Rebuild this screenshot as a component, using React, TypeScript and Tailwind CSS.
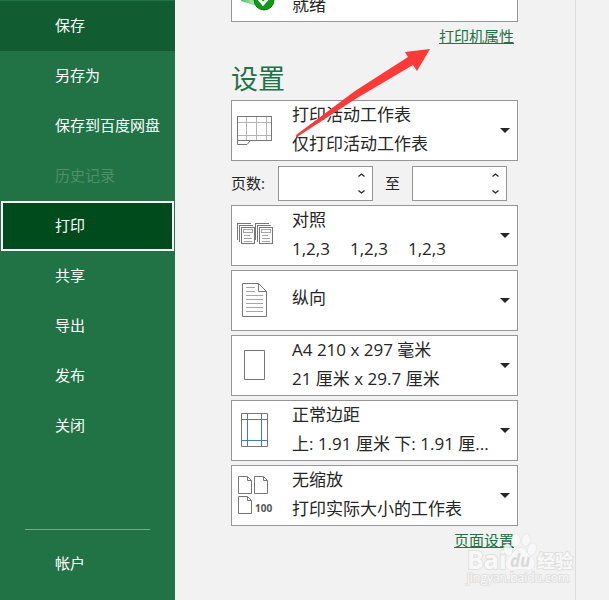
import type { ReactNode } from 'react';

type NavItem = {
  label: string;
  state?: 'hover' | 'active' | 'disabled';
};

const navItems: NavItem[] = [
  { label: '保存', state: 'hover' },
  { label: '另存为' },
  { label: '保存到百度网盘' },
  { label: '历史记录', state: 'disabled' },
  { label: '打印', state: 'active' },
  { label: '共享' },
  { label: '导出' },
  { label: '发布' },
  { label: '关闭' },
];

const NavButton = ({ label, state }: NavItem) => {
  if (state === 'active') {
    return (
      <button
        aria-current="page"
        className="h-[50px] mx-px pl-[52px] pb-[2px] text-left border-2 border-white bg-[#004b1c]"
      >
        {label}
      </button>
    );
  }
  return (
    <button
      disabled={state === 'disabled'}
      className={
        state === 'hover'
          ? 'h-[50px] pl-[55px] pb-[2px] text-left bg-[#125c31]'
          : 'h-[50px] pl-[55px] pb-[2px] text-left disabled:text-[#4f9069]'
      }
    >
      {label}
    </button>
  );
};

const Sidebar = () => (
  <nav className="w-[175px] shrink-0 pt-px flex flex-col bg-[#217346] text-white text-[15px]">
    {navItems.map((item) => (
      <NavButton key={item.label} {...item} />
    ))}
    <hr className="mt-[78px] mx-[25px] border-[#6fae88]" />
    <div className="mt-[9px] flex flex-col">
      <NavButton label="帐户" />
    </div>
  </nav>
);

const PrinterIcon = () => (
  <svg width="48" height="59" viewBox="0 0 48 59" fill="none">
    <defs>
      <linearGradient id="tray" x1="0" y1="0" x2="1" y2="0">
        <stop offset="0" stopColor="#4fc45c" />
        <stop offset="1" stopColor="#b9ecbd" />
      </linearGradient>
    </defs>
    <path d="M9 30 L24 28 V44 L9 39 Z" fill="url(#tray)" />
    <circle cx="32" cy="38" r="10" fill="#0f9a17" stroke="#0a7a10" />
    <path d="M27 37 L31 42 L38 34" stroke="#fff" strokeWidth="3" />
  </svg>
);

const SheetIcon = () => (
  <svg width="48" height="59" viewBox="0 0 48 59" fill="none" shapeRendering="crispEdges">
    <path d="M14.5 16 V40 M24.5 16 V40 M34.5 16 V40 M6 21.5 H40 M6 34.5 H40" stroke="#b4b4b4" />
    <path d="M5.5 15.5 H39.5 V39.5 H5.5 Z" stroke="#777" />
    <path d="M5.5 39.5 V43.5 H15 L18.5 39.5" stroke="#777" shapeRendering="auto" />
  </svg>
);

const CollatePages = ({ x }: { x: number }) => (
  <g transform={`translate(${x} 0)`}>
    <path d="M.5 34 V17.5 H14 M2.5 36 V19.5 H16" stroke="#777" />
    <path d="M4.5 21.5 H17.5 V37.5 H4.5 Z" stroke="#777" fill="#fff" />
    <path d="M6.5 23.5 H15.5 V26.5 H6.5 Z M7 29.5 H13 M7 32.5 H15 M7 35.5 H15" stroke="#a6a6a6" />
  </g>
);

const CollateIcon = () => (
  <svg width="48" height="59" viewBox="0 0 48 59" fill="none" shapeRendering="crispEdges">
    <CollatePages x={5} />
    <CollatePages x={23} />
  </svg>
);

const PortraitIcon = () => (
  <svg width="48" height="59" viewBox="0 0 48 59" fill="none">
    <path
      d="M14 16.5 H23 M14 20.5 H23 M14 24.5 H31 M14 28.5 H31 M14 32.5 H31 M14 36.5 H31 M14 40.5 H31"
      stroke="#a6a6a6"
    />
    <path d="M10.5 12.5 H26.5 L34.5 20.5 V45.5 H10.5 Z M26.5 12.5 V20.5 H34.5" stroke="#777" />
  </svg>
);

const PaperIcon = () => (
  <svg width="48" height="59" viewBox="0 0 48 59" fill="none">
    <path d="M12.5 14.5 H32.5 V43.5 H12.5 Z" stroke="#777" />
  </svg>
);

const MarginIcon = () => (
  <svg width="48" height="59" viewBox="0 0 48 59" fill="none">
    <path d="M9.5 12.5 H35.5 V45.5 H9.5 Z" stroke="#777" />
    <path d="M15.5 13 V45 M29.5 13 V45 M10 18.5 H35 M10 39.5 H35" stroke="#3e7dbf" />
  </svg>
);

const ScaleIcon = () => (
  <svg width="48" height="59" viewBox="0 0 48 59" fill="none">
    <g stroke="#777">
      <path d="M6.5 10.5 H15.5 L19.5 14.5 V27.5 H6.5 Z M15.5 10.5 V14.5 H19.5" />
      <path d="M22.5 10.5 H31.5 L35.5 14.5 V27.5 H22.5 Z M31.5 10.5 V14.5 H35.5" />
      <path d="M6.5 30.5 H15.5 L19.5 34.5 V47.5 H6.5 Z M15.5 30.5 V34.5 H19.5" />
    </g>
    <text x="23" y="46" fontSize="10" fontWeight="700" fill="#555">
      100
    </text>
  </svg>
);

type OptionProps = {
  icon: ReactNode;
  children: ReactNode;
};

const OptionBox = ({ icon, children }: OptionProps) => (
  <button
    aria-haspopup="listbox"
    className="w-full h-[61px] pr-[7px] flex items-center text-left border border-[#969696] bg-white text-[17px] leading-[29px] text-[#262626]"
  >
    <span className="w-[60px] shrink-0">{icon}</span>
    <span className="flex-1 min-w-0 pb-1">{children}</span>
    <svg className="shrink-0" width="10" height="5" viewBox="0 0 10 5">
      <path d="M0 0 H10 L5 5 Z" fill="#262626" />
    </svg>
  </button>
);

const PageInput = ({ id, label }: { id: string; label: string }) => (
  <div className="w-[95px] h-[35px] flex border border-[#969696] bg-white">
    <input id={id} aria-label={label} className="flex-1 min-w-0 px-2 text-[15px] outline-none" />
    <div className="w-[22px] flex flex-col">
      <button aria-label="增加" className="flex-1 flex items-center justify-center">
        <svg width="7" height="4" viewBox="0 0 7 4" fill="none">
          <path d="M.5 3.5 L3.5 1 L6.5 3.5" stroke="#262626" strokeWidth="1.3" />
        </svg>
      </button>
      <button aria-label="减少" className="flex-1 flex items-center justify-center">
        <svg width="7" height="4" viewBox="0 0 7 4" fill="none">
          <path d="M.5 .5 L3.5 3 L6.5 .5" stroke="#262626" strokeWidth="1.3" />
        </svg>
      </button>
    </div>
  </div>
);

const Arrow = () => (
  <svg
    className="absolute left-[295px] top-[48px] pointer-events-none"
    width="136"
    height="90"
    viewBox="0 0 136 90"
  >
    <path d="M135 1 L110 4 L113 9 L60 43 L1 87 L2 89 L62 50 L118 17 L122 23 Z" fill="#fd3a38" />
  </svg>
);

const Watermark = () => (
  <svg
    className="absolute left-[464px] top-[532px] pointer-events-none"
    width="116"
    height="56"
    viewBox="0 0 116 56"
    fill="#fafafa"
    stroke="#dedede"
    paintOrder="stroke"
    opacity="0.85"
  >
    <text x="3" y="37" fontSize="25" fontWeight="700" strokeWidth="2">
      Bai
    </text>
    <ellipse cx="44" cy="18" rx="4" ry="6" transform="rotate(-15 44 18)" />
    <ellipse cx="52" cy="8" rx="4" ry="6" />
    <ellipse cx="62" cy="8" rx="4" ry="6" transform="rotate(8 62 8)" />
    <ellipse cx="68" cy="17" rx="4" ry="6" transform="rotate(20 68 17)" />
    <path d="M56 16 C62 16 62 21 67 25 C73 30 71 38 64 38 C60 37 52 37 49 38 C41 38 40 30 45 25 C50 21 50 16 56 16 Z" />
    <text x="46" y="35" fontSize="17" fontWeight="700" fontStyle="italic" fill="#d6d6d6" stroke="none">
      du
    </text>
    <text x="73" y="36" fontSize="18" fontWeight="700" strokeWidth="2">
      经验
    </text>
    <text x="3" y="50" fontSize="12" strokeWidth="2">
      jingyan.baidu.com
    </text>
  </svg>
);

const PrintSettings = () => (
  <section className="w-[401px] shrink-0 pl-14 pr-[57px] border-r border-[#dcdcdc] text-[15px] text-[#262626]">
    <div className="-mt-[39px]">
      <OptionBox icon={<PrinterIcon />}>
        <span className="block h-[29px]" />
        <span className="block">就绪</span>
      </OptionBox>
    </div>
    <div className="h-7 pr-1 flex items-center justify-end">
      <a href="#printer" className="text-[#217346] underline">
        打印机属性
      </a>
    </div>
    <h2 className="h-[50px] pt-[9px] text-[27px] leading-[40px] text-[#217346]">设置</h2>
    <div className="flex flex-col gap-1">
      <OptionBox icon={<SheetIcon />}>
        <span className="block">打印活动工作表</span>
        <span className="block">仅打印活动工作表</span>
      </OptionBox>
      <div className="h-9 flex items-end">
        <label htmlFor="from" className="w-[47px] leading-[35px]">
          页数:
        </label>
        <PageInput id="from" label="起始页" />
        <label htmlFor="to" className="w-[39px] text-center leading-[35px]">
          至
        </label>
        <PageInput id="to" label="结束页" />
      </div>
      <OptionBox icon={<CollateIcon />}>
        <span className="block">对照</span>
        <span className="flex gap-5">
          <span>1,2,3</span>
          <span>1,2,3</span>
          <span>1,2,3</span>
        </span>
      </OptionBox>
      <OptionBox icon={<PortraitIcon />}>
        <span className="block pb-[2px]">纵向</span>
      </OptionBox>
      <OptionBox icon={<PaperIcon />}>
        <span className="block">A4 210 x 297 毫米</span>
        <span className="block">21 厘米 x 29.7 厘米</span>
      </OptionBox>
      <OptionBox icon={<MarginIcon />}>
        <span className="block">正常边距</span>
        <span className="block truncate">上: 1.91 厘米 下: 1.91 厘...</span>
      </OptionBox>
      <OptionBox icon={<ScaleIcon />}>
        <span className="block">无缩放</span>
        <span className="block">打印实际大小的工作表</span>
      </OptionBox>
    </div>
    <div className="h-7 pr-1 flex items-center justify-end">
      <a href="#page-setup" className="text-[#217346] underline">
        页面设置
      </a>
    </div>
  </section>
);

const App = () => {
  return (
    <div className="relative flex h-screen overflow-hidden bg-[#f2f2f2] font-['Open_Sans','Noto_Sans_CJK_SC',sans-serif]">
      <Sidebar />
      <PrintSettings />
      <main className="flex-1" />
      <Arrow />
      <Watermark />
    </div>
  );
};

export default App;
